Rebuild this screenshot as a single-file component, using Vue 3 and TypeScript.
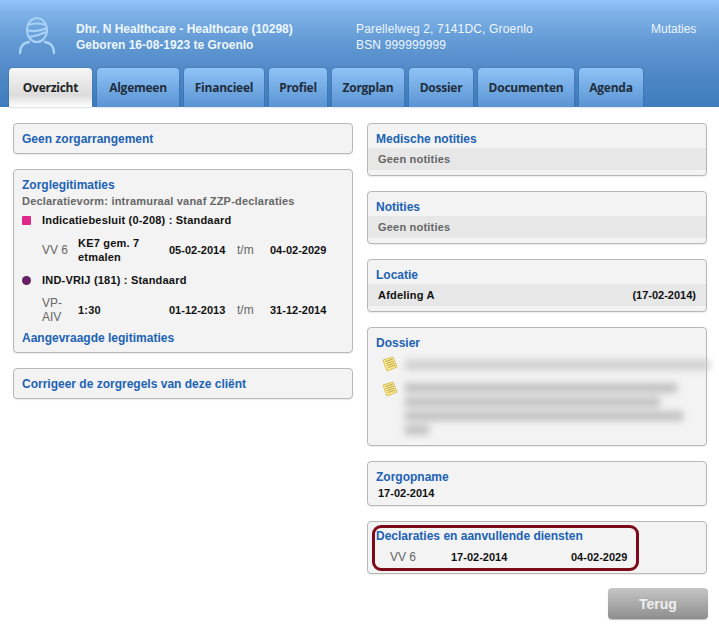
<script setup lang="ts">
interface Tab { label: string; width: number }
const tabs: Tab[] = [
  { label: 'Overzicht', width: 83 },
  { label: 'Algemeen', width: 82 },
  { label: 'Financieel', width: 80 },
  { label: 'Profiel', width: 58 },
  { label: 'Zorgplan', width: 72 },
  { label: 'Dossier', width: 64 },
  { label: 'Documenten', width: 96 },
  { label: 'Agenda', width: 64 },
]
const blurA: number[] = [305]
const blurB: number[] = [272, 255, 278, 24]
</script>

<template>
  <div class="page">
    <header class="head">
      <div class="info">
        <svg class="avatar" width="38" height="38" viewBox="0 0 38 38" fill="none" stroke="#a9d2f6" stroke-width="2">
          <ellipse cx="19" cy="13" rx="10" ry="12" />
          <path d="M10 8 Q19 5 28 8" />
          <path d="M9 13 Q19 16 29 11" />
          <path d="M11 20 Q20 19 28 15" />
          <path d="M2 36 Q2 26 11 25" stroke-linecap="round" stroke-width="2.4" />
          <path d="M27 25 Q36 26 36 36" stroke-linecap="round" stroke-width="2.4" />
        </svg>
        <div class="who">
          <div>Dhr. N Healthcare - Healthcare (10298)</div>
          <div>Geboren 16-08-1923 te Groenlo</div>
        </div>
        <div class="addr">
          <div>Parellelweg 2, 7141DC, Groenlo</div>
          <div>BSN 999999999</div>
        </div>
        <div class="mut">Mutaties</div>
      </div>
      <nav class="tabs">
        <div
          v-for="(t, i) in tabs"
          :key="t.label"
          class="tab"
          :class="{ active: i === 0 }"
          :style="{ width: t.width + 'px' }"
        >{{ t.label }}</div>
      </nav>
    </header>

    <main class="cols">
      <section class="col">
        <div class="panel"><div class="title">Geen zorgarrangement</div></div>

        <div class="panel legit">
          <div class="title">Zorglegitimaties</div>
          <div class="sub">Declaratievorm: intramuraal vanaf ZZP-declaraties</div>
          <div class="ind"><span class="mark square"></span>Indicatiebesluit (0-208) : Standaard</div>
          <div class="row">
            <span class="code">VV 6</span><span>KE7 gem. 7 etmalen</span><span class="d">05-02-2014</span><span class="code">t/m</span><span class="d">04-02-2029</span>
          </div>
          <div class="ind"><span class="mark round"></span>IND-VRIJ (181) : Standaard</div>
          <div class="row">
            <span class="code">VP-AIV</span><span>1:30</span><span class="d">01-12-2013</span><span class="code">t/m</span><span class="d">31-12-2014</span>
          </div>
          <div class="title link">Aangevraagde legitimaties</div>
        </div>

        <div class="panel"><div class="title">Corrigeer de zorgregels van deze cliënt</div></div>
      </section>

      <section class="col">
        <div class="panel">
          <div class="title">Medische notities</div>
          <div class="band grey">Geen notities</div>
        </div>
        <div class="panel">
          <div class="title">Notities</div>
          <div class="band grey">Geen notities</div>
        </div>
        <div class="panel">
          <div class="title">Locatie</div>
          <div class="band spread"><span>Afdeling A</span><span class="d">(17-02-2014)</span></div>
        </div>
        <div class="panel dossier">
          <div class="title">Dossier</div>
          <div class="note first">
            <svg width="16" height="16" viewBox="0 0 16 16">
              <path d="M1 4 L11 1 L15 11 L5 15 Z" fill="#fbe88a" stroke="#d8c060" stroke-width="1" />
              <path d="M3.5 5.5 L10.5 3.2 M4.5 7.5 L11.5 5.2 M5.2 9.5 L12.2 7.2 M6 11.5 L13 9.2" stroke="#a8964a" stroke-width="0.8" />
            </svg>
            <div class="blurred">
              <div v-for="(w, i) in blurA" :key="i" class="bar" :style="{ width: w + 'px' }"></div>
            </div>
          </div>
          <div class="note">
            <svg width="16" height="16" viewBox="0 0 16 16">
              <path d="M1 4 L11 1 L15 11 L5 15 Z" fill="#fbe88a" stroke="#d8c060" stroke-width="1" />
              <path d="M3.5 5.5 L10.5 3.2 M4.5 7.5 L11.5 5.2 M5.2 9.5 L12.2 7.2 M6 11.5 L13 9.2" stroke="#a8964a" stroke-width="0.8" />
            </svg>
            <div class="blurred">
              <div v-for="(w, i) in blurB" :key="i" class="bar" :style="{ width: w + 'px' }"></div>
            </div>
          </div>
        </div>
        <div class="panel opname">
          <div class="title">Zorgopname</div>
          <div class="date d">17-02-2014</div>
        </div>
        <div class="panel decl">
          <div class="title">Declaraties en aanvullende diensten</div>
          <div class="declrow"><span class="code">VV 6</span><span class="d">17-02-2014</span><span class="d">04-02-2029</span></div>
          <div class="ring"></div>
        </div>
        <div class="actions"><button class="back" type="button">Terug</button></div>
      </section>
    </main>
  </div>
</template>

<style>
html, body { margin: 0; background: #fff; }
</style>

<style scoped>
.page {
  width: 719px;
  height: 629px;
  overflow: hidden;
  font: bold 12px/16px "Liberation Sans", Arial, sans-serif;
  color: #111;
}
.head {
  height: 107px;
  box-sizing: border-box;
  display: flex;
  flex-direction: column;
  justify-content: flex-end;
  background: linear-gradient(#92c6fb 0, #7fb2e8 12px, #5f97d2 45px, #4c86c4 80px, #3f7cbf 107px);
}
.info {
  display: flex;
  align-items: flex-start;
  height: 68px;
  box-sizing: border-box;
  padding: 17px 0 0 18px;
  color: #eef6ff;
}
.avatar { flex: none; }
.who { margin: 4px 0 0 20px; width: 280px; }
.addr { margin-top: 4px; width: 295px; font-weight: normal; letter-spacing: 0.16px; }
.mut { margin-top: 4px; font-weight: normal; }
.tabs { display: flex; gap: 5px; padding-left: 9px; height: 39px; }
.tab {
  height: 39px;
  line-height: 40px;
  box-sizing: border-box;
  text-align: center;
  font-family: "Open Sans", sans-serif;
  font-size: 12px;
  font-weight: 700;
  color: #1f2d3d;
  letter-spacing: -0.25px;
  border-radius: 4px 4px 0 0;
  background: linear-gradient(#8fc3f7, #5a94d2);
  box-shadow: 0 0 2px rgba(30, 70, 120, 0.5);
}
.tab.active {
  background: linear-gradient(#f6f6f6, #dcdcdc 70%, #fff);
  color: #222;
}
.cols {
  display: flex;
  gap: 14px;
  padding: 16px 12px 0 13px;
}
.col { width: 340px; display: flex; flex-direction: column; gap: 15px; }
.panel {
  position: relative;
  box-sizing: border-box;
  background: #f3f3f3;
  border: 1px solid #b8b8b8;
  border-radius: 4px;
  padding: 7px 0 5px;
  font-size: 11px;
  letter-spacing: 0.2px;
  box-shadow: 0 1px 1px rgba(0, 0, 0, 0.08);
}
.title {
  padding-left: 8px;
  color: #2062b4;
  font-size: 12px;
  letter-spacing: 0;
  line-height: 17px;
}
.sub { padding-left: 8px; color: #666; line-height: 15px; }
.grey { color: #666; }
.code { color: #666; font-size: 12px; font-weight: normal; letter-spacing: 0; }
.d { letter-spacing: 0; }
.legit { height: 184px; }
.ind {
  display: flex;
  align-items: center;
  padding-left: 8px;
  height: 16px;
  margin-top: 3px;
}
.mark { width: 9px; height: 9px; margin-right: 11px; background: #e0288c; border-radius: 1px; }
.mark.round { background: #642060; border-radius: 50%; }
.row {
  display: grid;
  grid-template-columns: 36px 91px 68px 33px 1fr;
  align-items: center;
  padding-left: 28px;
  line-height: 14px;
  height: 30px;
  margin-top: 7px;
}
.row > span { padding-right: 6px; }
.row > span:nth-child(n + 3) { white-space: nowrap; padding-right: 0; }
.row + .ind { margin-top: 7px; }
.link { margin-top: 5px; }
.band {
  background: #e7e7e7;
  height: 22px;
  line-height: 22px;
  padding: 0 10px;
}
.spread { display: flex; justify-content: space-between; }
.dossier { height: 119px; }
.note { display: flex; padding-left: 14px; }
.note.first { margin-top: 4px; height: 25px; }
.note svg { flex: none; margin-right: 7px; }
.blurred { filter: blur(3.5px); width: 310px; }
.bar { height: 10px; margin: 2px 0 4px; background: #c2c2c2; }
.first .bar { opacity: 0.7; margin-top: 4px; }
.opname { height: 45px; }
.date { padding-left: 10px; line-height: 15px; }
.decl { height: 53px; padding-top: 6px; }
.declrow { display: flex; padding: 4px 0 0 22px; line-height: 16px; }
.declrow > span:first-child { width: 61px; }
.declrow > span:nth-child(2) { width: 120px; }
.ring {
  position: absolute;
  left: 4px;
  top: 3px;
  width: 261px;
  height: 40px;
  border: 3px solid #7d0a18;
  border-radius: 9px;
  pointer-events: none;
}
.actions { display: flex; justify-content: flex-end; margin: -1px -1px 0 0; }
.back {
  width: 100px;
  height: 31px;
  border: 0;
  border-radius: 4px;
  background: linear-gradient(#c6c6c6, #8e8e8e);
  color: #eee;
  font: bold 14px "Liberation Sans", Arial, sans-serif;
  box-shadow: 0 1px 1px rgba(0, 0, 0, 0.25);
}
</style>
